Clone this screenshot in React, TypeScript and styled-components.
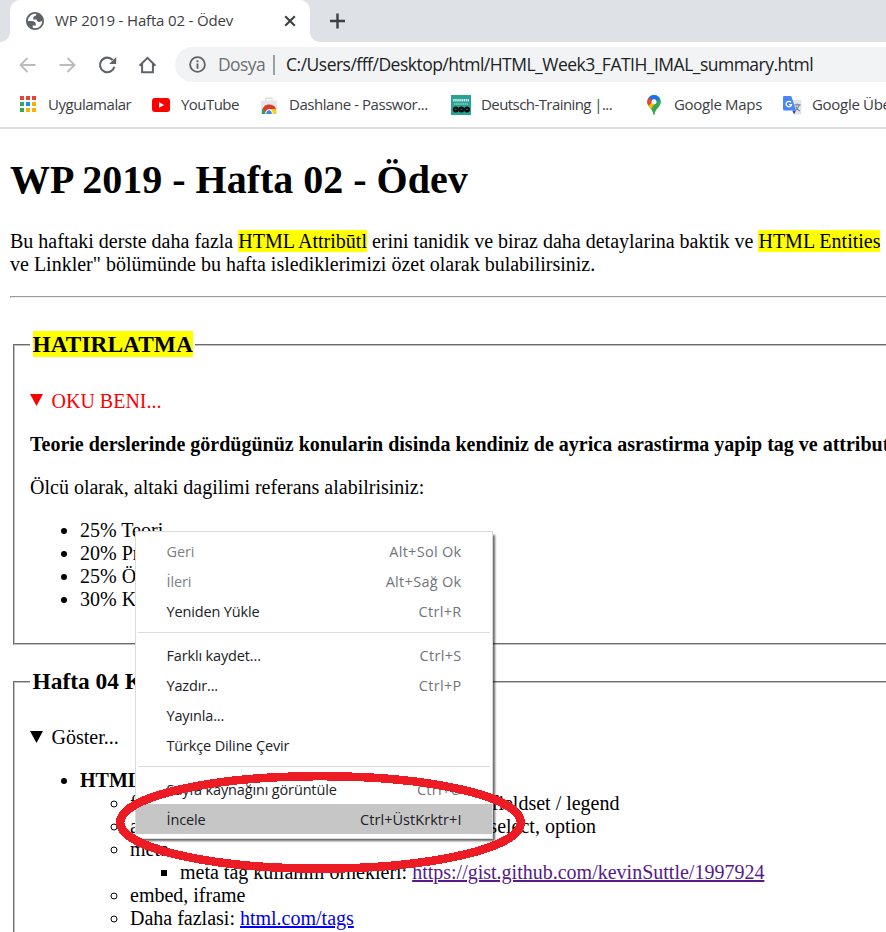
import React from "react";
import styled, { createGlobalStyle } from "styled-components";

const GlobalStyle = createGlobalStyle`
  html, body { margin: 0; padding: 0; background: #fff; }
  body { overflow: hidden; }
`;

const Screen = styled.div`
  position: relative;
  width: 886px;
  height: 932px;
  overflow: hidden;
  background: #fff;
`;

/* ---------- browser frame ---------- */

const Browser = styled.header`
  font-family: "Open Sans", "Noto Sans", sans-serif;
  color: #3c4043;
  border-bottom: 2px solid #dadce0;
  height: 127px;
`;

const TabStrip = styled.div`
  display: flex;
  height: 42px;
  background: #dee1e6;
`;

const TabCorner = styled.div<{ $side: "left" | "right" }>`
  width: 10px;
  background: radial-gradient(
    circle at ${(p) => (p.$side === "left" ? "0 32px" : "10px 32px")},
    #dee1e6 9.5px,
    #fff 10.3px
  );
  clip-path: inset(32px 0 0 0);
`;

const Tab = styled.div`
  display: flex;
  align-items: center;
  box-sizing: border-box;
  width: 300px;
  padding: 0 14px 0 16px;
  background: #fff;
  border-radius: 10px 10px 0 0;
`;

const Label = styled.span<{ $size?: number; $track?: number; $color?: string; $gap?: number; $lift?: number }>`
  white-space: nowrap;
  font-size: ${(p) => p.$size ?? 15}px;
  line-height: 20px;
  letter-spacing: ${(p) => p.$track ?? 0}px;
  color: ${(p) => p.$color ?? "inherit"};
  margin-left: ${(p) => p.$gap ?? 0}px;
  padding-bottom: ${(p) => p.$lift ?? 1}px;
`;

const Spacer = styled.div`
  flex: 1;
`;

const NewTab = styled.div`
  display: flex;
  align-items: center;
  padding-left: 9px;
`;

const Toolbar = styled.div`
  display: flex;
  align-items: center;
  height: 45px;
  padding-left: 17px;
`;

const NavIcons = styled.div`
  display: flex;
  gap: 20px;
  width: 158px;
`;

const Omnibox = styled.div`
  display: flex;
  align-items: center;
  box-sizing: border-box;
  flex: 1;
  height: 35px;
  padding-left: 14px;
  background: #f1f3f4;
  border-radius: 18px 0 0 18px;
`;

const Divider = styled.div`
  width: 2px;
  height: 20px;
  margin: 0 11px 0 8px;
  background: #9aa0a6;
`;

const Bookmarks = styled.nav`
  display: grid;
  grid-template-columns: 133px 109px 190px 196px 136px 160px;
  align-items: center;
  height: 36px;
  padding-left: 19px;
`;

const Bookmark = styled.div`
  display: flex;
  align-items: center;
`;

const IconSlot = styled.div<{ $w: number }>`
  display: flex;
  width: ${(p) => p.$w}px;
`;

/* ---------- document ---------- */

const Page = styled.main`
  padding: 28px 0 0 10px;
  width: 1180px;
  font-family: "Liberation Serif", "Times New Roman", serif;
  font-size: 20px;
  line-height: 23px;
  color: #000;
`;

const Title = styled.h1`
  margin: 0 0 27px;
  font-size: 40px;
  line-height: 46px;
`;

const Para = styled.p<{ $bold?: boolean }>`
  margin: 0 0 20px;
  white-space: nowrap;
  font-weight: ${(p) => (p.$bold ? 700 : 400)};
`;

const Mark = styled.mark`
  background: #ff0;
  color: #000;
`;

const Rule = styled.hr`
  margin: 0 0 10px;
  border: 1px inset #eee;
`;

const Group = styled.fieldset`
  margin: 0 2.5px;
  padding: 7.5px 15.5px 12px;
  border: 2px groove #c0c0c0;
`;

const Legend = styled.legend`
  padding: 0 2.5px;
`;

const GroupTitle = styled.h3`
  margin: 23px 0 25px;
  font-size: 23.4px;
  line-height: 26px;
`;

const Summary = styled.div<{ $color: string }>`
  display: flex;
  align-items: center;
  gap: 8.5px;
  margin-bottom: 20px;
  color: ${(p) => p.$color};
`;

const List = styled.ul<{ $marker: string; $nested?: boolean }>`
  margin: 0 0 ${(p) => (p.$nested ? 0 : 20)}px;
  padding-left: 50px;
  list-style-type: ${(p) => p.$marker};
  white-space: nowrap;
`;

const Strong = styled.b``;

const Link = styled.a<{ $visited?: boolean }>`
  color: ${(p) => (p.$visited ? "#551a8b" : "#0000ee")};
  text-decoration: underline;
`;

const TagRun = styled.span<{ $w: number }>`
  display: inline-flex;
  justify-content: space-between;
  width: ${(p) => p.$w}px;
  vertical-align: top;
`;

/* ---------- context menu ---------- */

const Menu = styled.div`
  position: absolute;
  left: 135px;
  top: 531px;
  box-sizing: border-box;
  width: 358px;
  height: 308px;
  padding: 4px 0;
  border: 1px solid #d8dadd;
  background: #fff;
  box-shadow: 3px 3px 2px -1px rgba(0, 0, 0, 0.6);
  font-family: "Open Sans", "Noto Sans", sans-serif;
`;

const MenuRow = styled.div<{ $active?: boolean }>`
  display: flex;
  align-items: center;
  justify-content: space-between;
  box-sizing: border-box;
  height: 30px;
  padding: 2px 30.5px 0 30.5px;
  background: ${(p) => (p.$active ? "#c6c6c6" : "transparent")};
`;

const MenuRule = styled.div`
  height: 1px;
  margin: 6px 2px 7px;
  background: #dadce0;
`;

const Highlight = styled.svg`
  position: absolute;
  left: 110px;
  top: 766px;
`;

/* ---------- icons ---------- */

const Triangle = () => (
  <svg width="13" height="14" viewBox="0 0 13 14">
    <path d="M0 0H13L6.5 12Z" fill="currentColor" />
  </svg>
);

const Globe = () => (
  <svg width="18" height="18" viewBox="2 2 20 20">
    <path
      d="M12 2c5.52 0 10 4.48 10 10s-4.48 10-10 10S2 17.52 2 12 6.48 2 12 2zM4 12h4.4c3.407.022 4.922 1.73 4.543 5.127H9.488v2.47a8.004 8.004 0 0 0 10.498-8.083C19.327 12.504 18.332 13 17 13c-2.137 0-3.206-.916-3.206-2.75h-3.748c-.274-2.728.683-4.092 2.87-4.092 0-.975.327-1.597.811-1.97A8.004 8.004 0 0 0 4 12z"
      fill="#5f6368"
      fillRule="evenodd"
    />
  </svg>
);

const Cross = () => (
  <svg width="12" height="12" viewBox="0 0 12 12">
    <path d="M1.2 1.2L10.8 10.8M10.8 1.2L1.2 10.8" stroke="#3c4043" strokeWidth="2.1" />
  </svg>
);

const Plus = () => (
  <svg width="16" height="16" viewBox="0 0 16 16">
    <path d="M8.5 .5V15.5M1 8H16" stroke="#3c4043" strokeWidth="2.4" />
  </svg>
);

const Arrow = ({ flip }: { flip?: boolean }) => (
  <svg width="20" height="20" viewBox="0 0 20 20">
    <path
      d={flip ? "M2.5 10H17.3M10.5 3L17.5 10L10.5 17" : "M18.5 10H3.7M10.5 3L3.5 10L10.5 17"}
      fill="none"
      stroke="#babcbe"
      strokeWidth="1.9"
    />
  </svg>
);

const Reload = () => (
  <svg width="20" height="20" viewBox="0 0 20 20">
    <path d="M17.4 11.8A7.3 7.3 0 1 1 15.7 5" fill="none" stroke="#5f6368" strokeWidth="2.1" />
    <path d="M19.2 2V9H12.2Z" fill="#5f6368" />
  </svg>
);

const Home = () => (
  <svg width="20" height="20" viewBox="0 0 20 20">
    <path d="M2.6 10.8L10.5 2.8L18.4 10.8M5.1 9V17.2H15.9V9" fill="none" stroke="#5f6368" strokeWidth="2" />
  </svg>
);

const Info = () => (
  <svg width="17" height="17" viewBox="0 0 17 17">
    <circle cx="8.5" cy="8.5" r="7.4" fill="none" stroke="#5f6368" strokeWidth="1.8" />
    <path d="M8.5 7.6V12.7M8.5 4.3V6.2" stroke="#5f6368" strokeWidth="1.9" />
  </svg>
);

const appColors = ["#ea4335", "#ea4335", "#ea4335", "#34a853", "#1a8cf0", "#fbb004", "#34a853", "#fbb004", "#fbb004"];

const Apps = () => (
  <svg width="18" height="18" viewBox="0 0 18 18">
    {appColors.map((c, i) => (
      <rect key={i} x={1 + (i % 3) * 6} y={Math.floor(i / 3) * 6} width="4" height="4" fill={c} />
    ))}
  </svg>
);

const YouTube = () => (
  <svg width="18" height="14" viewBox="0 0 18 14">
    <rect width="18" height="14" rx="3" fill="#f00" />
    <path d="M7 4.2V9.8L12.2 7Z" fill="#fff" />
  </svg>
);

const WebStore = () => (
  <svg width="16" height="17" viewBox="0 0 16 17">
    <path d="M5 4V1.2H11V4" fill="none" stroke="#d5d7d9" strokeWidth="1.2" />
    <path d="M0 3.5H16V17H0Z" fill="#e6e7e8" />
    <path d="M1 14C2 9.6 4.5 7.6 8 7.6C11.8 7.6 14.2 9.4 15 12H8L5 15Z" fill="#dd3b30" />
    <path d="M1 17C.7 14.8 1 12.5 2 11.5L5.5 17Z" fill="#2ca24c" />
    <path d="M9 12H15C15.3 13.5 15.2 15.5 14.8 17H9Z" fill="#fbd023" />
    <path d="M4.2 17C4.2 10.6 11.8 10.6 11.8 17Z" fill="#fff" />
    <path d="M5.2 17C5.2 12 10.8 12 10.8 17Z" fill="#3b82f0" />
  </svg>
);

const Deutsch = () => (
  <svg width="20" height="20" viewBox="0 0 20 20">
    <rect width="20" height="20" fill="#29a193" />
    <path d="M2 5.2H18" stroke="#c3e8e3" strokeWidth="2.6" strokeDasharray="1.6 .5" />
    <path d="M3 9H17" stroke="#90d2c9" strokeWidth="1.6" strokeDasharray="1.3 .5" />
    <g fill="#07110f">
      <circle cx="4.8" cy="14.4" r="3" />
      <circle cx="10.4" cy="14.4" r="3" />
      <circle cx="16" cy="14.4" r="3" />
    </g>
    <path d="M4 14.4H5.6M9.6 14.4H11.2M15.2 14.4H16.8" stroke="#7b5a68" strokeWidth="1" />
  </svg>
);

const MapsPin = () => (
  <svg width="14" height="20" viewBox="0 0 14 20">
    <defs>
      <clipPath id="pin">
        <path d="M7 0A6.8 6.8 0 0 1 13.8 6.8C13.8 12 8.4 13.5 7.7 19.3Q7 20.5 6.3 19.3C5.6 13.5.2 12 .2 6.8A6.8 6.8 0 0 1 7 0Z" />
      </clipPath>
    </defs>
    <g clipPath="url(#pin)">
      <rect width="14" height="20" fill="#34a853" />
      <path d="M0 11L5 5L9 9L3 15H0Z" fill="#fbbc04" />
      <path d="M0 10V0H3L7 5L2 10.5Z" fill="#ea4335" />
      <path d="M1.8 2.4L5.5 -1H14V4L8 8L5.5 6Z" fill="#1a73e8" />
      <path d="M13 3.4L14 7L8 14L5 12Z" fill="#34a853" />
    </g>
    <circle cx="7" cy="6.8" r="2.5" fill="#fff" />
  </svg>
);

const Translate = () => (
  <svg width="19" height="19" viewBox="0 0 19 19">
    <path d="M7 4H17.5Q18.5 4 18.5 5V17.5Q18.5 18.5 17.5 18.5H11Z" fill="#e2e4e6" />
    <path
      d="M11.5 8.8H17.5M14.3 7.5V9M16.2 9C15.7 11.5 14 13.3 12 14.5M12.8 10.5C13.7 12.8 15 14 16.8 15"
      fill="none"
      stroke="#6f8793"
      strokeWidth="1.2"
    />
    <path d="M9.3 14.4H13L11 18.5Z" fill="#3444bd" />
    <path d="M1.3 0H8.3L13 14.4H1.3Q0 14.4 0 13V1.3Q0 0 1.3 0Z" fill="#4a86f4" />
    <path d="M8 6.4A2.7 2.7 0 1 0 8.5 8.6H6" fill="none" stroke="#fff" strokeWidth="1.3" />
  </svg>
);

/* ---------- data ---------- */

type BookmarkItem = { icon: React.ReactNode; slot: number; text: string; track: number };

const bookmarks: BookmarkItem[] = [
  { icon: <Apps />, slot: 29, text: "Uygulamalar", track: -0.47 },
  { icon: <YouTube />, slot: 29, text: "YouTube", track: -0.55 },
  { icon: <WebStore />, slot: 28, text: "Dashlane - Passwor...", track: -0.45 },
  { icon: <Deutsch />, slot: 30, text: "Deutsch-Training |...", track: -0.57 },
  { icon: <MapsPin />, slot: 27, text: "Google Maps", track: -0.3 },
  { icon: <Translate />, slot: 29, text: "Google Übersetzer", track: -0.3 },
];

type MenuItem = {
  text: string;
  keys?: string;
  keyTrack?: number;
  disabled?: boolean;
  active?: boolean;
};

const menuGroups: MenuItem[][] = [
  [
    { text: "Geri", keys: "Alt+Sol Ok", disabled: true },
    { text: "İleri", keys: "Alt+Sağ Ok", disabled: true },
    { text: "Yeniden Yükle", keys: "Ctrl+R" },
  ],
  [
    { text: "Farklı kaydet...", keys: "Ctrl+S" },
    { text: "Yazdır...", keys: "Ctrl+P" },
    { text: "Yayınla..." },
    { text: "Türkçe Diline Çevir" },
  ],
  [
    { text: "Sayfa kaynağını görüntüle", keys: "Ctrl+U" },
    { text: "İncele", keys: "Ctrl+ÜstKrktr+I", keyTrack: 0.05, active: true },
  ],
];

const ContextMenu = () => (
  <Menu>
    {menuGroups.map((group, g) => (
      <React.Fragment key={g}>
        {g > 0 && <MenuRule />}
        {group.map((item) => (
          <MenuRow key={item.text} $active={item.active}>
            <Label $size={14.5} $track={-0.15} $color={item.disabled ? "#7d8185" : "#202124"}>
              {item.text}
            </Label>
            {item.keys && (
              <Label $size={14.5} $track={item.keyTrack ?? 0.3} $color={item.active ? "#202124" : "#70757a"}>
                {item.keys}
              </Label>
            )}
          </MenuRow>
        ))}
      </React.Fragment>
    ))}
  </Menu>
);

export default function App() {
  return (
    <Screen>
      <GlobalStyle />
      <Browser>
        <TabStrip>
          <TabCorner $side="left" />
          <Tab>
            <Globe />
            <Label $gap={11} $track={-0.17} $lift={3}>WP 2019 - Hafta 02 - Ödev</Label>
            <Spacer />
            <Cross />
          </Tab>
          <TabCorner $side="right" />
          <NewTab>
            <Plus />
          </NewTab>
        </TabStrip>
        <Toolbar>
          <NavIcons>
            <Arrow />
            <Arrow flip />
            <Reload />
            <Home />
          </NavIcons>
          <Omnibox>
            <Info />
            <Label $size={17.5} $gap={12} $track={-0.6} $color="#6b6f74">Dosya</Label>
            <Divider />
            <Label $size={17.5} $track={-0.51} $color="#202124">
              C:/Users/fff/Desktop/html/HTML_Week3_FATIH_IMAL_summary.html
            </Label>
          </Omnibox>
        </Toolbar>
        <Bookmarks>
          {bookmarks.map((b) => (
            <Bookmark key={b.text}>
              <IconSlot $w={b.slot}>{b.icon}</IconSlot>
              <Label $track={b.track} $lift={3}>{b.text}</Label>
            </Bookmark>
          ))}
        </Bookmarks>
      </Browser>

      <Page>
        <Title>WP 2019 - Hafta 02 - Ödev</Title>
        <Para>
          Bu haftaki derste daha fazla <Mark>HTML Attribūtl</Mark> erini tanidik ve biraz daha detaylarina baktik ve{" "}
          <Mark>HTML Entities</Mark>
          <br />
          ve Linkler" bölümünde bu hafta islediklerimizi özet olarak bulabilirsiniz.
        </Para>
        <Rule />
        <Group>
          <Legend>
            <GroupTitle>
              <Mark>HATIRLATMA</Mark>
            </GroupTitle>
          </Legend>
          <Summary $color="#f00">
            <Triangle />
            OKU BENI...
          </Summary>
          <Para $bold>
            Teorie derslerinde gördügünüz konularin disinda kendiniz de ayrica asrastirma yapip tag ve attributleri
          </Para>
          <Para>Ölcü olarak, altaki dagilimi referans alabilrisiniz:</Para>
          <List $marker="disc">
            <li>25% Teori</li>
            <li>20% Pratik</li>
            <li>25% Ödev</li>
            <li>30% Katilim</li>
          </List>
        </Group>
        <Group>
          <Legend>
            <GroupTitle>Hafta 04 Konulari</GroupTitle>
          </Legend>
          <Summary $color="#000">
            <Triangle />
            Göster...
          </Summary>
          <List $marker="disc">
            <li>
              <Strong>HTML Tags</Strong>
              <List $marker="circle" $nested>
                <li>
                  <TagRun $w={489.5}>
                    <span>form, input, label,</span>
                    <span>fieldset / legend</span>
                  </TagRun>
                </li>
                <li>
                  <TagRun $w={466}>
                    <span>audio, video,</span>
                    <span>select, option</span>
                  </TagRun>
                </li>
                <li>
                  meta
                  <List $marker="square" $nested>
                    <li>
                      meta tag kullanim örnekleri:{" "}
                      <Link $visited>https://gist.github.com/kevinSuttle/1997924</Link>
                    </li>
                  </List>
                </li>
                <li>embed, iframe</li>
                <li>
                  Daha fazlasi: <Link>html.com/tags</Link>
                </li>
              </List>
            </li>
          </List>
        </Group>
      </Page>

      <ContextMenu />
      <Highlight width="421" height="113" viewBox="0 0 421 113" shapeRendering="crispEdges">
        <ellipse cx="210.5" cy="56.4" rx="200.3" ry="46.2" fill="none" stroke="#ed1c24" strokeWidth="8.5" />
      </Highlight>
    </Screen>
  );
}
